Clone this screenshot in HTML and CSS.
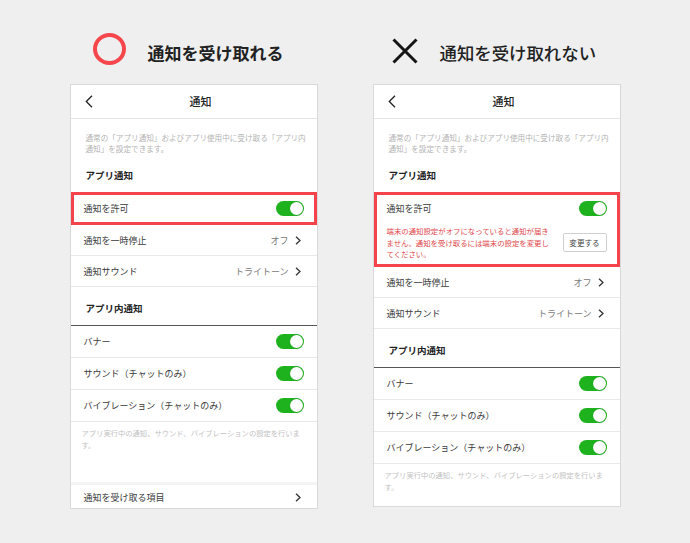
FILE: index.html
```html
<!DOCTYPE html>
<html lang="ja">
<head>
  <meta charset="UTF-8">
  <meta name="viewport" content="width=device-width, initial-scale=1.0">
  <title>通知の設定</title>
  <link rel="stylesheet" href="styles.css">
</head>
<body>
  <div class="column">
    <div class="caption caption-ok">
      <span class="mark-circle"></span>
      <h1>通知を受け取れる</h1>
    </div>

    <div class="phone phone-left">
      <div class="nav">
        <svg class="back" width="8" height="13" viewBox="0 0 8 13"><path d="M7 0.8 L1.3 6.5 L7 12.2" fill="none" stroke="#222" stroke-width="1.3"/></svg>
        <span class="nav-title">通知</span>
        <span></span>
      </div>
      <p class="desc">通常の「アプリ通知」およびアプリ使用中に受け取る「アプリ内<br>通知」を設定できます。</p>

      <div class="section-title">アプリ通知</div>
      <div class="row row-mark">
        <span>通知を許可</span>
        <span class="toggle"></span>
      </div>
      <div class="row">
        <span>通知を一時停止</span>
        <span class="value">オフ<svg width="6" height="9" viewBox="0 0 6 9"><path d="M1 0.7 L5 4.5 L1 8.3" fill="none" stroke="#333" stroke-width="1.3"/></svg></span>
      </div>
      <div class="row">
        <span>通知サウンド</span>
        <span class="value">トライトーン<svg width="6" height="9" viewBox="0 0 6 9"><path d="M1 0.7 L5 4.5 L1 8.3" fill="none" stroke="#333" stroke-width="1.3"/></svg></span>
      </div>

      <div class="section-title section-dark">アプリ内通知</div>
      <div class="row row-tall">
        <span>バナー</span>
        <span class="toggle"></span>
      </div>
      <div class="row row-tall">
        <span>サウンド（チャットのみ）</span>
        <span class="toggle"></span>
      </div>
      <div class="row row-tall">
        <span>バイブレーション（チャットのみ）</span>
        <span class="toggle"></span>
      </div>
      <p class="note">アプリ実行中の通知、サウンド、バイブレーションの設定を行いま<br>す。</p>

      <div class="row row-last">
        <span>通知を受け取る項目</span>
        <span class="value"><svg width="6" height="9" viewBox="0 0 6 9"><path d="M1 0.7 L5 4.5 L1 8.3" fill="none" stroke="#333" stroke-width="1.3"/></svg></span>
      </div>
    </div>
  </div>

  <div class="column">
    <div class="caption caption-ng">
      <svg class="mark-cross" width="26" height="26" viewBox="0 0 26 26"><path d="M1.5 1.5 L24.5 24.5 M24.5 1.5 L1.5 24.5" stroke="#151515" stroke-width="3"/></svg>
      <h1>通知を受け取れない</h1>
    </div>

    <div class="phone phone-right">
      <div class="nav">
        <svg class="back" width="8" height="13" viewBox="0 0 8 13"><path d="M7 0.8 L1.3 6.5 L7 12.2" fill="none" stroke="#222" stroke-width="1.3"/></svg>
        <span class="nav-title">通知</span>
        <span></span>
      </div>
      <p class="desc">通常の「アプリ通知」およびアプリ使用中に受け取る「アプリ内<br>通知」を設定できます。</p>

      <div class="section-title">アプリ通知</div>
      <div class="warn-box">
        <div class="warn-head">
          <span>通知を許可</span>
          <span class="toggle"></span>
        </div>
        <div class="warn-body">
          <p class="warn-text">端末の通知設定がオフになっていると通知が届き<br>ません。通知を受け取るには端末の設定を変更し<br>てください。</p>
          <button class="change-btn">変更する</button>
        </div>
      </div>
      <div class="row">
        <span>通知を一時停止</span>
        <span class="value">オフ<svg width="6" height="9" viewBox="0 0 6 9"><path d="M1 0.7 L5 4.5 L1 8.3" fill="none" stroke="#333" stroke-width="1.3"/></svg></span>
      </div>
      <div class="row">
        <span>通知サウンド</span>
        <span class="value">トライトーン<svg width="6" height="9" viewBox="0 0 6 9"><path d="M1 0.7 L5 4.5 L1 8.3" fill="none" stroke="#333" stroke-width="1.3"/></svg></span>
      </div>

      <div class="section-title section-dark">アプリ内通知</div>
      <div class="row row-tall">
        <span>バナー</span>
        <span class="toggle"></span>
      </div>
      <div class="row row-tall">
        <span>サウンド（チャットのみ）</span>
        <span class="toggle"></span>
      </div>
      <div class="row row-tall">
        <span>バイブレーション（チャットのみ）</span>
        <span class="toggle"></span>
      </div>
      <p class="note">アプリ実行中の通知、サウンド、バイブレーションの設定を行いま<br>す。</p>
    </div>
  </div>
</body>
</html>
```

FILE: styles.css
```css
body {
  font-family: "Noto Sans CJK JP", "Noto Sans", sans-serif;
  background-color: #efefef;
  color: #333;
  display: flex;
  justify-content: center;
  gap: 55px;
  width: 690px;
  height: 543px;
  margin: 0;
  overflow: hidden;
}
.column {
  width: 248px;
}

/* captions above the phones */
.caption {
  height: 84px;
  box-sizing: border-box;
  padding-top: 20px;
  display: flex;
  align-items: center;
  gap: 22px;
}
.caption h1 {
  margin: 0;
  font-size: 17px;
  font-weight: 700;
  color: #222;
  white-space: nowrap;
}
.caption-ok {
  padding-left: 23px;
}
.caption-ng {
  padding-left: 19px;
}
.caption-ng h1 {
  font-size: 17.4px;
  font-weight: 500;
}
.mark-circle {
  width: 33px;
  height: 32px;
  border: 4px solid #f5464c;
  border-radius: 50%;
  box-sizing: border-box;
  margin-bottom: 6px;
}
.mark-cross {
  margin-bottom: 2px;
}

/* phone screens */
.phone {
  background-color: white;
  border: 1px solid #d9d9d9;
  box-sizing: border-box;
  display: flex;
  flex-direction: column;
}
.phone-left {
  height: 425px;
}
.phone-right {
  height: 423px;
}
.nav {
  height: 34px;
  box-sizing: border-box;
  border-bottom: 1px solid #e4e4e4;
  display: grid;
  grid-template-columns: 1fr auto 1fr;
  align-items: center;
  padding-left: 14px;
  padding-bottom: 1px;
}
.nav-title {
  font-size: 11px;
  font-weight: 500;
  color: #222;
}
.desc {
  margin: 0;
  padding: 13px 15px 0;
  font-size: 7.6px;
  line-height: 11px;
  color: #b3b3b3;
  white-space: nowrap;
}
.section-title {
  padding: 14px 15px 10px;
  font-size: 9.5px;
  line-height: 14px;
  font-weight: 700;
  color: #222;
}
.section-dark {
  border-bottom: 1px solid #555;
}

.row {
  height: 31px;
  box-sizing: border-box;
  padding: 0 13px;
  border-bottom: 1px solid #e8e8e8;
  display: flex;
  align-items: center;
  justify-content: space-between;
  font-size: 9px;
  color: #3a3a3a;
  white-space: nowrap;
}
.row-tall {
  height: 32px;
}
.row-mark {
  height: 33px;
  border: 3px solid #f4434a;
  padding: 0 10px;
}
.row-last {
  margin-top: auto;
  height: 26px;
  border-top: 3px solid #f4f4f4;
  border-bottom: none;
  padding-top: 1px;
}
.value {
  display: flex;
  align-items: center;
  gap: 6px;
  margin-right: 3px;
  color: #777;
}

.toggle {
  position: relative;
  width: 28px;
  height: 15px;
  border-radius: 8px;
  background-color: #1fb21f;
}
.toggle::after {
  content: "";
  position: absolute;
  right: 1px;
  top: 1px;
  width: 13px;
  height: 13px;
  border-radius: 50%;
  background-color: white;
  box-shadow: 0 0 1px rgba(0, 0, 0, 0.3);
}

.note {
  margin: 0;
  padding: 6px 11px 0;
  font-size: 7.3px;
  line-height: 11.5px;
  color: #c2c2c2;
  white-space: nowrap;
}

/* warning box on the right phone */
.warn-box {
  height: 75px;
  box-sizing: border-box;
  border: 3px solid #f4434a;
  padding: 0 10px;
}
.warn-head {
  height: 27px;
  display: flex;
  align-items: center;
  justify-content: space-between;
  font-size: 9px;
  color: #3a3a3a;
}
.warn-body {
  display: flex;
  align-items: center;
  justify-content: space-between;
  padding-top: 3px;
}
.warn-text {
  margin: 0;
  font-size: 7.4px;
  line-height: 11.5px;
  color: #e0474a;
  white-space: nowrap;
}
.change-btn {
  width: 44px;
  height: 19px;
  padding: 0;
  border: 1px solid #cfcfcf;
  border-radius: 2px;
  background-color: white;
  font-family: inherit;
  font-size: 7.6px;
  color: #444;
}
```
